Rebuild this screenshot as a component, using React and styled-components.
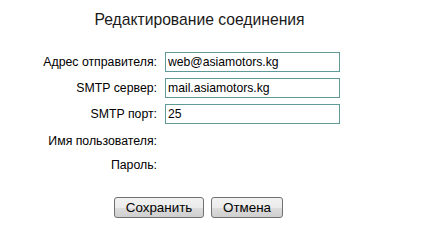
import React from 'react';
import styled, { createGlobalStyle } from 'styled-components';

const Global = createGlobalStyle`
  body {
    margin: 0;
    background: #fff;
    font-family: "Liberation Sans", Arial, sans-serif;
  }
`;

const Page = styled.div`
  width: 423px;
  height: 241px;
  padding-top: 10px;
  box-sizing: border-box;
`;

const Title = styled.h1`
  margin: 0 0 19px;
  font-size: 15.7px;
  font-weight: normal;
  line-height: 20px;
  color: #1a1a1a;
  text-align: center;
  padding-right: 24px;
`;

const Fields = styled.div`
  display: grid;
  grid-template-columns: 157px 175px;
  column-gap: 8px;
  align-items: center;
`;

const Label = styled.div`
  text-align: right;
  font-size: 12.3px;
  color: #000;
  height: ${p => p.h}px;
  line-height: ${p => p.h}px;
`;

const Cell = styled.div`
  height: ${p => p.h}px;
  display: flex;
  align-items: center;
`;

const Input = styled.input`
  box-sizing: border-box;
  width: 175px;
  height: 20px;
  margin: 0;
  padding: 0 2px;
  border: 1px solid #5f9a98;
  font-family: "Liberation Sans", Arial, sans-serif;
  font-size: 12.2px;
  color: #000;
  outline: none;
`;

const Actions = styled.div`
  display: flex;
  gap: 7px;
  padding-left: 114px;
  margin-top: 21px;
`;

const Button = styled.button`
  box-sizing: border-box;
  height: 21px;
  width: ${p => p.w}px;
  padding: 0;
  border: 1px solid #707070;
  border-radius: 3px;
  background: linear-gradient(#f2f2f2 0%, #ebebeb 50%, #dddddd 51%, #cfcfcf 100%);
  font-family: "Liberation Sans", Arial, sans-serif;
  font-size: 13.4px;
  color: #000;
`;

const rows = [
  { label: 'Адрес отправителя:', value: 'web@asiamotors.kg', h: 26 },
  { label: 'SMTP сервер:', value: 'mail.asiamotors.kg', h: 26 },
  { label: 'SMTP порт:', value: '25', h: 26 },
  { label: 'Имя пользователя:', h: 28 },
  { label: 'Пароль:', h: 21 },
];

export default function App() {
  return (
    <Page>
      <Global />
      <Title>Редактирование соединения</Title>
      <Fields>
        {rows.map(r => (
          <React.Fragment key={r.label}>
            <Label h={r.h}>{r.label}</Label>
            <Cell h={r.h}>
              {r.value !== undefined && <Input defaultValue={r.value} />}
            </Cell>
          </React.Fragment>
        ))}
      </Fields>
      <Actions>
        <Button w={90}>Сохранить</Button>
        <Button w={72}>Отмена</Button>
      </Actions>
    </Page>
  );
}
